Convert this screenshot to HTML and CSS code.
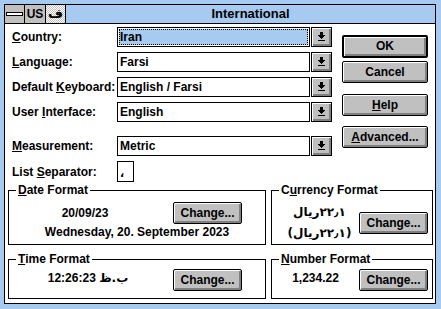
FILE: index.html
```html
<!DOCTYPE html>
<html>
<head>
<meta charset="utf-8">
<link rel="stylesheet" href="styles.css">
</head>
<body>
<div class="window">
  <div class="inner">
    <div class="titlebar">
      <div class="tb-btn sysmenu"><span class="bar"></span></div>
      <div class="tb-btn us">US</div>
      <div class="tb-btn fa">ف</div>
      <div class="caption">International</div>
    </div>
    <div class="content">
      <div class="top">
        <div class="fields">
          <div class="row">
            <span class="lbl"><u>C</u>ountry:</span>
            <div class="combo">
              <div class="field focus"><span class="sel">Iran</span></div>
              <div class="drop"><svg width="7" height="9" viewBox="0 0 7 9" shape-rendering="crispEdges"><rect x="2" y="0" width="3" height="3"/><rect x="0" y="3" width="7" height="1"/><rect x="1" y="4" width="5" height="1"/><rect x="2" y="5" width="3" height="1"/><rect x="3" y="6" width="1" height="1"/><rect x="0" y="8" width="7" height="1"/></svg></div>
            </div>
          </div>
          <div class="row">
            <span class="lbl"><u>L</u>anguage:</span>
            <div class="combo">
              <div class="field">Farsi</div>
              <div class="drop"><svg width="7" height="9" viewBox="0 0 7 9" shape-rendering="crispEdges"><rect x="2" y="0" width="3" height="3"/><rect x="0" y="3" width="7" height="1"/><rect x="1" y="4" width="5" height="1"/><rect x="2" y="5" width="3" height="1"/><rect x="3" y="6" width="1" height="1"/><rect x="0" y="8" width="7" height="1"/></svg></div>
            </div>
          </div>
          <div class="row">
            <span class="lbl">Default <u>K</u>eyboard:</span>
            <div class="combo">
              <div class="field">English / Farsi</div>
              <div class="drop"><svg width="7" height="9" viewBox="0 0 7 9" shape-rendering="crispEdges"><rect x="2" y="0" width="3" height="3"/><rect x="0" y="3" width="7" height="1"/><rect x="1" y="4" width="5" height="1"/><rect x="2" y="5" width="3" height="1"/><rect x="3" y="6" width="1" height="1"/><rect x="0" y="8" width="7" height="1"/></svg></div>
            </div>
          </div>
          <div class="row">
            <span class="lbl">User <u>I</u>nterface:</span>
            <div class="combo">
              <div class="field">English</div>
              <div class="drop"><svg width="7" height="9" viewBox="0 0 7 9" shape-rendering="crispEdges"><rect x="2" y="0" width="3" height="3"/><rect x="0" y="3" width="7" height="1"/><rect x="1" y="4" width="5" height="1"/><rect x="2" y="5" width="3" height="1"/><rect x="3" y="6" width="1" height="1"/><rect x="0" y="8" width="7" height="1"/></svg></div>
            </div>
          </div>
          <div class="row row-gap">
            <span class="lbl"><u>M</u>easurement:</span>
            <div class="combo">
              <div class="field">Metric</div>
              <div class="drop"><svg width="7" height="9" viewBox="0 0 7 9" shape-rendering="crispEdges"><rect x="2" y="0" width="3" height="3"/><rect x="0" y="3" width="7" height="1"/><rect x="1" y="4" width="5" height="1"/><rect x="2" y="5" width="3" height="1"/><rect x="3" y="6" width="1" height="1"/><rect x="0" y="8" width="7" height="1"/></svg></div>
            </div>
          </div>
          <div class="row row-sep">
            <span class="lbl">List <u>S</u>eparator:</span>
            <div class="sepbox">،</div>
          </div>
        </div>
        <div class="buttons">
          <div class="btn default">OK</div>
          <div class="btn b-cancel">Cancel</div>
          <div class="btn b-help"><u>H</u>elp</div>
          <div class="btn b-adv"><u>A</u>dvanced...</div>
        </div>
      </div>
      <div class="groups">
        <fieldset class="grp">
          <legend><u>D</u>ate Format</legend>
          <div class="date-body">
            <div class="date-row">
              <span class="dcol">20/09/23</span>
              <div class="btn chg">Change...</div>
            </div>
            <div class="longdate">Wednesday, 20. September 2023</div>
          </div>
        </fieldset>
        <fieldset class="grp">
          <legend>C<u>u</u>rrency Format</legend>
          <div class="cur-body">
            <div class="ccol">
              <div class="cline"><span class="ar">ریال</span><span class="num">۲۲٫۱</span></div>
              <div class="cline cline2"><span class="num">(</span><span class="ar">ریال</span><span class="num">۲۲٫۱)</span></div>
            </div>
            <div class="btn chg cchg">Change...</div>
          </div>
        </fieldset>
        <fieldset class="grp">
          <legend><u>T</u>ime Format</legend>
          <div class="time-body">
            <span class="tcol">12:26:23 <span class="ar">ب.ظ</span></span>
            <div class="btn chg">Change...</div>
          </div>
        </fieldset>
        <fieldset class="grp">
          <legend><u>N</u>umber Format</legend>
          <div class="num-body">
            <span class="ncol">1,234.22</span>
            <div class="btn chg">Change...</div>
          </div>
        </fieldset>
      </div>
    </div>
  </div>
</div>
</body>
</html>
```

FILE: styles.css
```css
html, body {
  margin: 0;
  padding: 0;
  background: #a6caf0;
}
body {
  font-family: "Liberation Sans", "DejaVu Sans", sans-serif;
  font-weight: bold;
  font-size: 12px;
  line-height: 14px;
  color: #000;
}
u {
  text-decoration: underline;
  text-underline-offset: 1px;
}
.window {
  width: 441px;
  height: 309px;
  box-sizing: border-box;
  background: #a6caf0;
  padding: 4px 5px 5px 4px;
  display: flex;
  flex-direction: column;
}
.inner {
  flex: 1;
  border: 1px solid #000;
  background: #fff;
  display: flex;
  flex-direction: column;
}
.titlebar {
  height: 18px;
  display: flex;
  border-bottom: 1px solid #000;
  background: #a6caf0;
}
.tb-btn {
  width: 19px;
  border-right: 1px solid #000;
  background: #c0c0c0;
  display: flex;
  align-items: center;
  justify-content: center;
}
.sysmenu .bar {
  width: 15px;
  height: 2px;
  background: #fff;
  border: 1px solid #000;
}
.us {
  width: 20px;
  font-size: 12px;
}
.fa {
  font-family: "DejaVu Sans", sans-serif;
  font-size: 13px;
  background: repeating-conic-gradient(#c0c0c0 0 25%, #fff 0 50%) 0 0 / 2px 2px;
}
.caption {
  flex: 1;
  text-align: center;
  font-size: 13px;
  line-height: 18px;
}
.content {
  flex: 1;
  padding: 3px 0 0 3px;
}
.top {
  display: flex;
}
.fields {
  margin-left: 4px;
  display: flex;
  flex-direction: column;
  width: 320px;
}
.row {
  display: flex;
  align-items: center;
  height: 20px;
  margin-top: 5px;
}
.row:first-child {
  margin-top: 0;
}
.row-gap {
  margin-top: 14px;
}
.row-sep {
  height: 21px;
}
.lbl {
  width: 105px;
  white-space: nowrap;
}
.combo {
  display: flex;
  width: 215px;
  height: 20px;
}
.field {
  flex: 1;
  border: 1px solid #000;
  display: flex;
  align-items: center;
  padding-left: 2px;
}
.field.focus {
  padding: 1px;
}
.sel {
  flex: 1;
  align-self: stretch;
  background: #a6caf0;
  outline: 1px dotted #000;
  outline-offset: -1px;
  padding-left: 1px;
  display: flex;
  align-items: center;
}
.drop {
  width: 19px;
  margin-left: 1px;
  border: 1px solid #000;
  background: #c0c0c0;
  box-shadow: inset 1px 1px 0 #fff, inset -2px -2px 0 #808080;
  display: flex;
  align-items: center;
  justify-content: center;
}
.drop svg {
  display: block;
  margin: 0 1px 1px 0;
}
.sepbox {
  height: 19px;
  border: 1px solid #000;
  display: flex;
  align-items: flex-end;
  padding-left: 2px;
  box-sizing: content-box;
  width: 13px;
  font-family: "DejaVu Sans", sans-serif;
  font-size: 11px;
  line-height: 14px;
}
.buttons {
  margin-left: 10px;
  width: 86px;
  display: flex;
  flex-direction: column;
}
.btn {
  box-sizing: border-box;
  height: 22px;
  border: 1px solid #000;
  border-radius: 2px;
  background: #c0c0c0;
  box-shadow: inset 1px 1px 0 #fff, inset -2px -2px 0 #808080;
  display: flex;
  align-items: center;
  justify-content: center;
  padding-bottom: 1px;
  white-space: nowrap;
}
.btn.default {
  margin-top: 8px;
  height: 23px;
  border-width: 2px;
}
.b-cancel {
  margin-top: 3px;
}
.b-help {
  margin-top: 11px;
}
.b-adv {
  margin-top: 10px;
}
.groups {
  margin-top: 1px;
  display: grid;
  grid-template-columns: 258px 162px;
  column-gap: 5px;
  row-gap: 7px;
}
.grp {
  margin: 0;
  padding: 0;
  border: 1px solid #000;
  min-width: 0;
}
.grp legend {
  margin-left: 7px;
  padding: 0 2px;
  line-height: 14px;
}
.date-body {
  padding: 5px 0 5px 0;
}
.date-row {
  display: flex;
  align-items: center;
}
.dcol {
  width: 152px;
  text-align: center;
}
.chg {
  width: 69px;
  margin-left: 12px;
}
.longdate {
  margin-top: 1px;
  text-align: center;
}
.cur-body {
  display: flex;
  align-items: flex-start;
  padding-bottom: 4px;
}
.ccol {
  width: 79px;
  margin-left: 8px;
  padding-top: 8px;
  display: flex;
  flex-direction: column;
  align-items: center;
}
.cline {
  unicode-bidi: isolate;
  direction: ltr;
  font-family: "DejaVu Sans", sans-serif;
  font-size: 12px;
  line-height: 14px;
  white-space: nowrap;
}
.cline2 {
  margin-top: 7px;
}
.ar {
  unicode-bidi: isolate;
  direction: rtl;
  font-family: "DejaVu Sans", sans-serif;
}
.num {
  unicode-bidi: bidi-override;
  direction: ltr;
}
.cchg {
  margin-left: 0;
  margin-top: 15px;
}
.time-body, .num-body {
  display: flex;
  align-items: flex-start;
  padding: 3px 0 7px 0;
}
.tcol {
  width: 152px;
  padding-left: 6px;
  box-sizing: border-box;
  text-align: center;
  margin-top: 2px;
  white-space: nowrap;
}
.tcol .ar {
  font-size: 12px;
}
.ncol {
  width: 79px;
  margin-left: 8px;
  padding-right: 8px;
  box-sizing: border-box;
  text-align: center;
  margin-top: 2px;
}
.num-body .chg {
  margin-left: 0;
}
```
